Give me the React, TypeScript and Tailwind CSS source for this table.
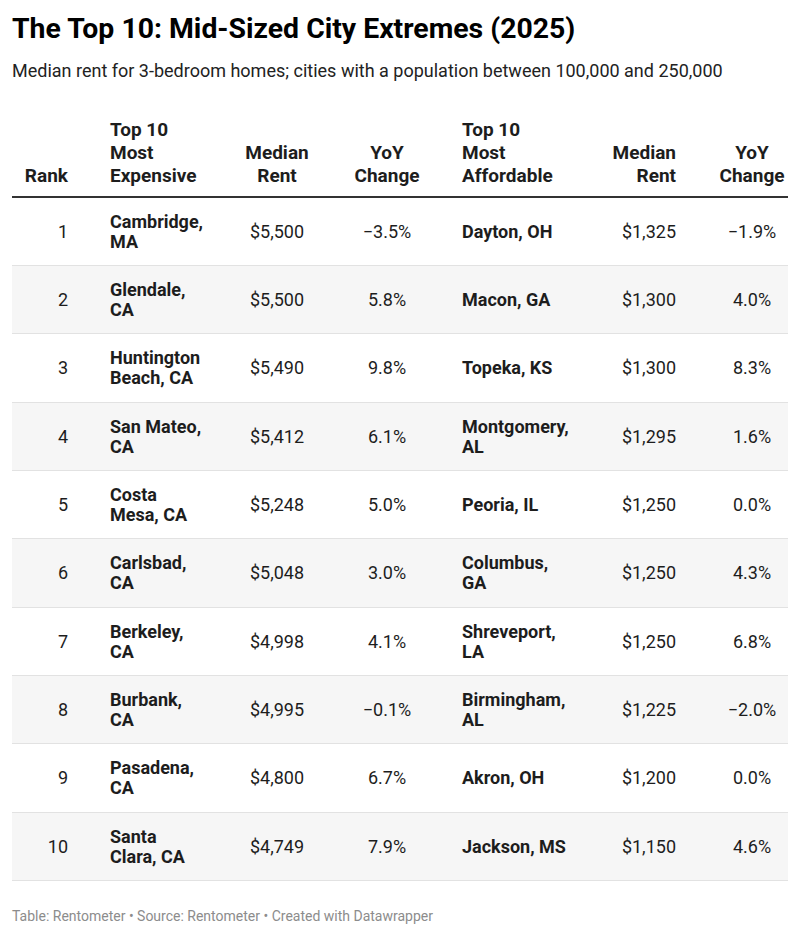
import React from "react";

type Row = {
  rank: number;
  exp: string;
  expRent: string;
  expYoy: string;
  aff: string;
  affRent: string;
  affYoy: string;
};

const rows: Row[] = [
  { rank: 1, exp: "Cambridge, MA", expRent: "$5,500", expYoy: "\u22123.5%", aff: "Dayton, OH", affRent: "$1,325", affYoy: "\u22121.9%" },
  { rank: 2, exp: "Glendale, CA", expRent: "$5,500", expYoy: "5.8%", aff: "Macon, GA", affRent: "$1,300", affYoy: "4.0%" },
  { rank: 3, exp: "Huntington Beach, CA", expRent: "$5,490", expYoy: "9.8%", aff: "Topeka, KS", affRent: "$1,300", affYoy: "8.3%" },
  { rank: 4, exp: "San Mateo, CA", expRent: "$5,412", expYoy: "6.1%", aff: "Montgomery, AL", affRent: "$1,295", affYoy: "1.6%" },
  { rank: 5, exp: "Costa Mesa, CA", expRent: "$5,248", expYoy: "5.0%", aff: "Peoria, IL", affRent: "$1,250", affYoy: "0.0%" },
  { rank: 6, exp: "Carlsbad, CA", expRent: "$5,048", expYoy: "3.0%", aff: "Columbus, GA", affRent: "$1,250", affYoy: "4.3%" },
  { rank: 7, exp: "Berkeley, CA", expRent: "$4,998", expYoy: "4.1%", aff: "Shreveport, LA", affRent: "$1,250", affYoy: "6.8%" },
  { rank: 8, exp: "Burbank, CA", expRent: "$4,995", expYoy: "\u22120.1%", aff: "Birmingham, AL", affRent: "$1,225", affYoy: "\u22122.0%" },
  { rank: 9, exp: "Pasadena, CA", expRent: "$4,800", expYoy: "6.7%", aff: "Akron, OH", affRent: "$1,200", affYoy: "0.0%" },
  { rank: 10, exp: "Santa Clara, CA", expRent: "$4,749", expYoy: "7.9%", aff: "Jackson, MS", affRent: "$1,150", affYoy: "4.6%" },
];

// fixed column widths, 12px page inset on both sides
const cols = "grid grid-cols-[76px_132px_114px_106px_150px_126px_72px]";

export default function App() {
  return (
    <div className="w-[800px] h-[937px] bg-white px-3 font-['Roboto',sans-serif] text-[#1d1d1d]">
      <h1 className="pt-[12px] text-[28.4px] leading-[34px] font-bold text-black">
        The Top 10: Mid-Sized City Extremes (2025)
      </h1>
      <p className="mt-[14px] text-[18px] leading-[22px] text-[#222]">
        Median rent for 3-bedroom homes; cities with a population between 100,000 and 250,000
      </p>

      {/* Header */}
      <div className={`${cols} mt-[36px] items-end border-b-2 border-[#333] pb-[9px] text-[19px] leading-[23px] font-bold`}>
        <div className="pr-[20px] text-right">Rank</div>
        <div className="pl-[22px]">
          Top 10
          <br />
          Most
          <br />
          Expensive
        </div>
        <div className="text-center">
          Median
          <br />
          Rent
        </div>
        <div className="text-center">
          YoY
          <br />
          Change
        </div>
        <div className="pl-[22px]">
          Top 10
          <br />
          Most
          <br />
          Affordable
        </div>
        <div className="pr-[40px] text-right">
          Median
          <br />
          Rent
        </div>
        <div className="text-center">
          YoY
          <br />
          Change
        </div>
      </div>

      {/* Body: rows are ~68.3px apart, so every third one gets an extra pixel */}
      <div>
        {rows.map((r, i) => (
          <div
            key={r.rank}
            className={`${cols} items-center border-b border-[#e2e2e2] text-[18px] leading-[20px] ${
              i % 3 === 2 ? "h-[69px]" : "h-[68px]"
            } ${i % 2 === 1 ? "bg-[#f6f6f6]" : "bg-white"}`}
          >
            <div className="pr-[20px] text-right">{r.rank}</div>
            <div className="pl-[22px]">
              <div className="max-w-[95px] font-bold">{r.exp}</div>
            </div>
            <div className="text-center">{r.expRent}</div>
            <div className="text-center">{r.expYoy}</div>
            <div className="pl-[22px]">
              <div className="max-w-[108px] font-bold">{r.aff}</div>
            </div>
            <div className="pr-[40px] text-right">{r.affRent}</div>
            <div className="text-center">{r.affYoy}</div>
          </div>
        ))}
      </div>

      <p className="mt-[26px] text-[14px] leading-[18px] text-[#8c8c8c]">
        Table: Rentometer • Source: Rentometer • Created with Datawrapper
      </p>
    </div>
  );
}
